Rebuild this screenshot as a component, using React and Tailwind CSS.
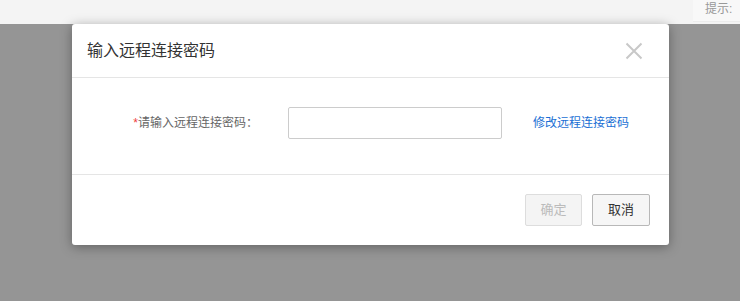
import React from 'react';

const App = () => {
  return (
    <div
      className="flex flex-col h-[301px] w-[740px] overflow-hidden bg-[#959595]"
      style={{ fontFamily: '"Liberation Sans", "Noto Sans CJK SC", sans-serif' }}
    >
      {/* top bar behind the mask */}
      <div className="h-[24px] shrink-0 bg-[#f4f4f4] flex justify-end">
        <div className="w-[47px] h-[22px] bg-[#f8f8f8] border-b border-[#ececec] pl-[12px] text-[12px] leading-[18px] text-[#999]">
          提示:
        </div>
      </div>

      <div className="pl-[72px]">
        <div className="w-[597px] h-[221px] bg-white rounded-[3px] shadow-[0_2px_12px_rgba(0,0,0,0.35)] flex flex-col">
          <div className="h-[54px] shrink-0 border-b border-[#e5e5e5] flex items-center justify-between pl-[15px] pr-[26px]">
            <span className="text-[16px] text-[#333]">输入远程连接密码</span>
            <svg width="18" height="18" viewBox="0 0 18 18">
              <path d="M1.5 1.5 L16.5 16.5 M16.5 1.5 L1.5 16.5" stroke="#c8c8c8" strokeWidth="2" />
            </svg>
          </div>

          <div className="h-[97px] shrink-0 border-b border-[#e5e5e5] flex items-center pb-[7px]">
            <div className="w-[186px] text-right text-[12px] text-[#666]">
              <span className="text-[#f04040]">*</span>请输入远程连接密码：
            </div>
            <input
              type="password"
              className="ml-[30px] w-[214px] h-[32px] border border-[#ccc] rounded-[2px] outline-none"
            />
            <a className="ml-[31px] text-[12px] text-[#1a6fd4] cursor-pointer">修改远程连接密码</a>
          </div>

          <div className="flex-1 flex items-center justify-end gap-[10px] pr-[19px]">
            <button className="w-[57px] h-[32px] bg-[#f4f4f4] border border-[#ddd] rounded-[2px] text-[13px] text-[#bbb]">
              确定
            </button>
            <button className="w-[58px] h-[32px] bg-[#f6f6f6] border border-[#b8b8b8] rounded-[2px] text-[13px] text-[#333]">
              取消
            </button>
          </div>
        </div>
      </div>
    </div>
  );
};

export default App;
